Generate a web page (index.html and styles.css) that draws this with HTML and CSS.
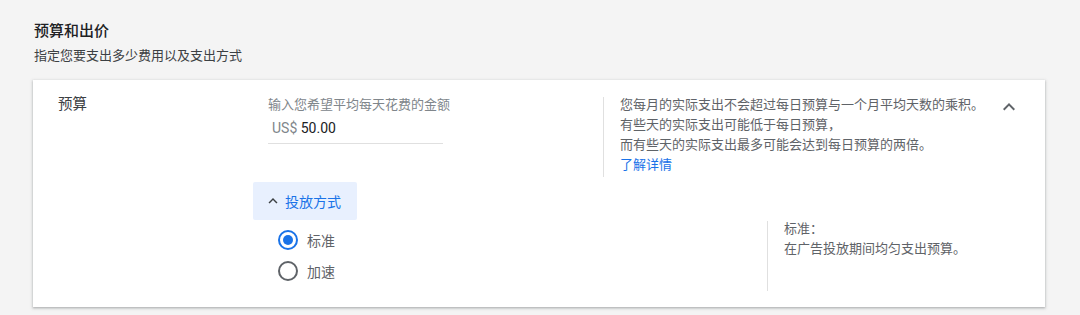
FILE: index.html
```html
<!DOCTYPE html>
<html lang="zh-CN">
<head>
<meta charset="utf-8">
<link rel="stylesheet" href="styles.css">
</head>
<body>
<div class="page">
  <div class="head">
    <div class="title">预算和出价</div>
    <div class="subtitle">指定您要支出多少费用以及支出方式</div>
  </div>
  <div class="card">
    <div class="row-budget">
      <div class="label">预算</div>
      <div class="input-col">
        <div class="placeholder">输入您希望平均每天花费的金额</div>
        <div class="field"><span class="currency">US$</span> <span class="amount">50.00</span></div>
      </div>
      <div class="help">
        <div>您每月的实际支出不会超过每日预算与一个月平均天数的乘积。</div>
        <div>有些天的实际支出可能低于每日预算，</div>
        <div>而有些天的实际支出最多可能会达到每日预算的两倍。</div>
        <a class="link">了解详情</a>
      </div>
      <div class="toggle">
        <svg viewBox="0 0 24 24" width="24" height="24"><path d="M12 8l-6 6 1.41 1.41L12 10.83l4.59 4.58L18 14z" fill="#5f6368"/></svg>
      </div>
    </div>
    <div class="delivery">
      <div class="del-btn">
        <svg viewBox="0 0 24 24" width="18" height="18"><path d="M12 8l-6 6 1.41 1.41L12 10.83l4.59 4.58L18 14z" fill="#3c4043"/></svg>
        <span>投放方式</span>
      </div>
      <div class="del-body">
        <div class="radios">
          <div class="radio-row"><span class="radio checked"></span><span class="rlabel">标准</span></div>
          <div class="radio-row"><span class="radio"></span><span class="rlabel">加速</span></div>
        </div>
        <div class="aside">
          <div>标准：</div>
          <div>在广告投放期间均匀支出预算。</div>
        </div>
      </div>
    </div>
  </div>
</div>
</body>
</html>
```
FILE: styles.css
```css
html, body {
  margin: 0;
  padding: 0;
  background: #f4f4f4;
  font-family: Roboto, "Noto Sans CJK SC", sans-serif;
  color: #3c4043;
}
.page {
  width: 1080px;
  height: 315px;
  overflow: hidden;
}
.head {
  padding: 21px 0 0 34px;
}
.title {
  font-size: 15px;
  font-weight: 500;
  line-height: 20px;
  color: #202124;
}
.subtitle {
  margin-top: 6px;
  font-size: 13px;
  line-height: 18px;
  color: #3c4043;
}
.card {
  margin: 15px 0 0 33px;
  width: 1012px;
  height: 227px;
  box-sizing: border-box;
  background: #fff;
  box-shadow: 0 1px 2px rgba(60,64,67,.3), 0 1px 3px 1px rgba(60,64,67,.12);
  padding: 15px 24px 0 25px;
}
.row-budget {
  display: grid;
  grid-template-columns: 210px 335px 1fr 24px;
  align-items: start;
}
.label {
  font-size: 14.5px;
  line-height: 20px;
  color: #3c4043;
}
.input-col {
  width: 175px;
  border-bottom: 1px solid #e0e0e0;
  padding-bottom: 5px;
}
.placeholder {
  font-size: 13px;
  line-height: 20px;
  color: #80868b;
  white-space: nowrap;
}
.field {
  margin-top: 3px;
  padding-left: 4px;
  font-size: 14px;
  line-height: 20px;
}
.currency { color: #80868b; }
.amount { color: #202124; }
.help {
  border-left: 1px solid #e0e0e0;
  padding-left: 16px;
  font-size: 13px;
  line-height: 20px;
  color: #5f6368;
  height: 80px;
  box-sizing: border-box;
  margin-top: 2px;
  white-space: nowrap;
}
.help > div:first-child { margin-top: -2px; }
.link {
  display: block;
  color: #1a73e8;
  text-decoration: none;
}
.toggle {
  width: 24px;
  height: 24px;
}
.toggle svg { display: block; }
.delivery {
  margin: 5px 0 0 195px;
}
.del-btn {
  display: inline-flex;
  align-items: center;
  gap: 3px;
  height: 38px;
  width: 104px;
  box-sizing: border-box;
  padding-left: 11px;
  background: #e8f0fe;
  color: #1a73e8;
  font-size: 14px;
  border-radius: 2px;
}
.del-btn svg { display: block; }
.del-body {
  display: flex;
  margin-top: 1px;
}
.radios {
  width: 514px;
  padding-top: 3px;
}
.radio-row {
  display: flex;
  align-items: center;
  height: 31px;
  padding-left: 25px;
}
.radio {
  width: 20px;
  height: 20px;
  box-sizing: border-box;
  border: 2px solid #5f6368;
  border-radius: 50%;
  position: relative;
}
.radio.checked {
  border-color: #1a73e8;
}
.radio.checked::after {
  content: "";
  position: absolute;
  left: 3px;
  top: 3px;
  width: 10px;
  height: 10px;
  border-radius: 50%;
  background: #1a73e8;
}
.rlabel {
  margin-left: 9px;
  font-size: 14px;
  color: #5f6368;
}
.aside {
  border-left: 1px solid #e0e0e0;
  padding-left: 16px;
  height: 70px;
  box-sizing: border-box;
  font-size: 13px;
  line-height: 20px;
  color: #5f6368;
}
.aside > div:first-child { margin-top: -2px; }
```
